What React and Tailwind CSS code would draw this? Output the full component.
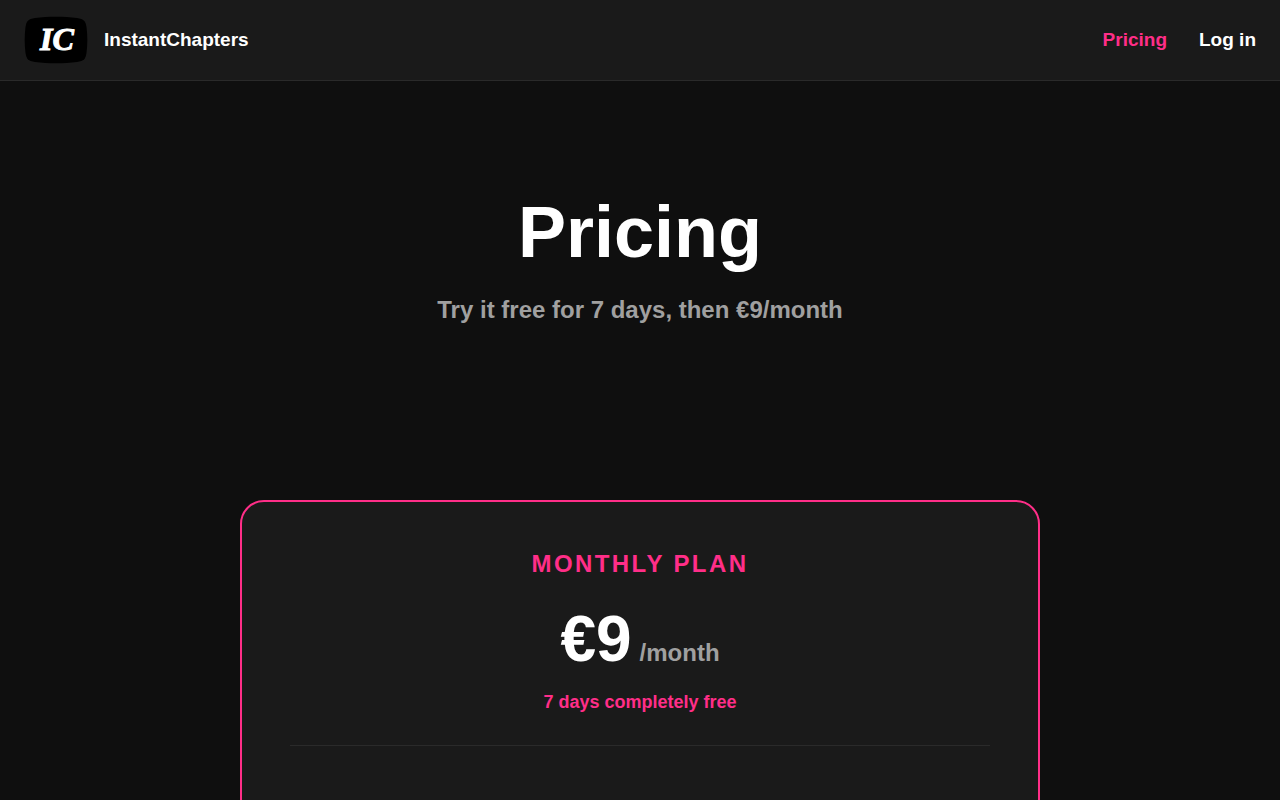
const NAV_LINKS = [
  { label: 'Pricing', href: '#pricing', active: true },
  { label: 'Log in', href: '#login', active: false },
]

function Logo() {
  return (
    <svg viewBox="0 0 64 48" className="w-16 h-12" aria-hidden="true">
      <path
        d="M11 2 C24 0.300 40 0.300 53 2 C60 3 61.500 5 62.500 11 C63.600 20 63.600 28 62.500 37 C61.500 43 60 45 53 46 C40 47.700 24 47.700 11 46 C4 45 2.500 43 1.500 37 C0.400 28 0.400 20 1.500 11 C2.500 5 4 3 11 2 Z"
        fill="#000"
      />
      <text
        x="16"
        y="34"
        fill="#fff"
        stroke="#fff"
        strokeWidth="1"
        fontFamily="'Liberation Serif', serif"
        fontSize="32"
        fontWeight="700"
        fontStyle="italic"
      >
        IC
      </text>
    </svg>
  )
}

function Header() {
  return (
    <header className="flex items-center justify-between px-6 py-4 bg-[#1a1a1a] border-b border-[#2a2a2a]">
      <a href="#home" className="flex items-center gap-4 text-[19px] leading-7">
        <Logo />
        <span>InstantChapters</span>
      </a>
      <nav className="flex items-center gap-8 text-[19px] leading-7">
        {NAV_LINKS.map(({ label, href, active }) => (
          <a key={label} href={href} className={active ? 'text-[#ff2e88]' : 'text-white'}>
            {label}
          </a>
        ))}
      </nav>
    </header>
  )
}

function PlanCard() {
  return (
    <section className="w-full max-w-[800px] mx-auto p-12 pb-24 rounded-3xl border-2 border-[#ff2e88] bg-[#1a1a1a] text-center">
      <h2 className="text-2xl leading-7 tracking-widest uppercase text-[#ff2e88]">Monthly plan</h2>
      <div className="flex items-baseline justify-center gap-2 mt-[29px]">
        <span className="text-[64px] leading-16">€9</span>
        <span className="text-2xl text-[#a0a0a0]">/month</span>
      </div>
      <p className="mt-[17px] text-lg leading-7 text-[#ff2e88]">7 days completely free</p>
      <hr className="mt-[29px] border-[#2a2a2a]" />
    </section>
  )
}

export default function App() {
  return (
    <div className="min-h-screen bg-[#0f0f0f] text-white font-bold font-['Liberation_Sans',Arial,sans-serif]">
      <Header />
      <main>
        {/* Hero */}
        <div className="px-6 pt-[115px] pb-[172px] text-center">
          <h1 className="text-7xl leading-none">Pricing</h1>
          <p className="mt-6 text-2xl leading-9 text-[#a0a0a0]">Try it free for 7 days, then €9/month</p>
        </div>

        <div className="px-6">
          <PlanCard />
        </div>
      </main>
    </div>
  )
}
